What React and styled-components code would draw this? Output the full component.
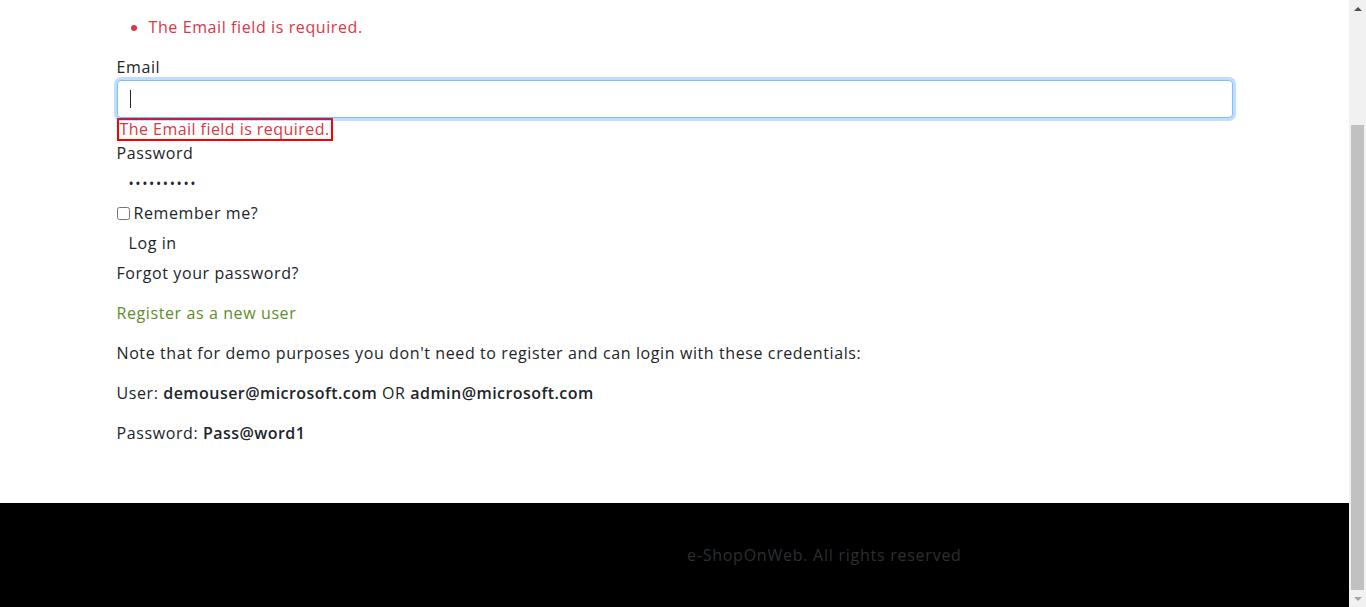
import React from "react";
import styled, { createGlobalStyle } from "styled-components";

const GlobalStyle = createGlobalStyle`
  html, body {
    margin: 0;
    padding: 0;
    background: #ffffff;
  }
  body {
    font-family: "Open Sans", "Liberation Sans", sans-serif;
    font-size: 16px;
    line-height: 24px;
    letter-spacing: 0.6px;
    color: #212529;
  }
  * {
    box-sizing: border-box;
  }
`;

const Page = styled.div`
  display: flex;
  flex-direction: column;
  margin-right: 17px;
`;

const Column = styled.div`
  width: 1116px;
  margin: 0 auto;
`;

const Summary = styled.ul`
  margin: 15px 0 16px;
  padding-left: 32px;
  color: #dc3545;
`;

const Label = styled.label`
  display: block;
  height: 24px;
  line-height: 24px;
`;

const InputWrap = styled.div`
  position: relative;
  margin-top: 1px;

  /* text caret of the focused field */
  &::after {
    content: "";
    position: absolute;
    left: 13px;
    top: 10px;
    width: 1px;
    height: 18px;
    background: #212529;
  }
`;

const EmailInput = styled.input`
  display: block;
  width: 100%;
  height: 38px;
  padding: 6px 12px;
  font: inherit;
  color: #495057;
  background: #fff;
  border: 1px solid #80bdff;
  border-radius: 4px;
  box-shadow: 0 0 0 3px rgba(0, 123, 255, 0.25);
  outline: none;
`;

const FieldError = styled.span`
  display: block;
  width: max-content;
  height: 23px;
  line-height: 19px;
  padding: 0 1px;
  border: 2px solid #ff0000;
  letter-spacing: 0.45px;
  color: #dc3545;
`;

const PasswordInput = styled.input`
  display: block;
  width: 300px;
  height: 30px;
  margin-top: 3px;
  padding: 0 12px;
  font: inherit;
  font-size: 14px;
  letter-spacing: 1.6px;
  color: #212529;
  background: transparent;
  border: none;
  outline: none;
`;

const CheckRow = styled.div`
  display: flex;
  align-items: center;
  height: 30px;
  gap: 4px;
`;

const Check = styled.input`
  width: 13px;
  height: 13px;
  margin: 0;
`;

const LoginButton = styled.button`
  display: block;
  height: 30px;
  padding: 0 12px;
  font: inherit;
  letter-spacing: inherit;
  color: #212529;
  background: transparent;
  border: none;
`;

const Line = styled.p`
  margin: 0 0 ${props => props.mb || "16px"};
  height: ${props => props.h || "24px"};
  line-height: ${props => props.h || "24px"};
  color: ${props => props.color || "#212529"};

  b {
    font-weight: 600;
    letter-spacing: 0.45px;
  }
`;

const Footer = styled.footer`
  margin-top: 42px;
  height: 104px;
  background: #000000;
  display: flex;
  align-items: center;
  padding-left: 687px;
  letter-spacing: 0.75px;
  color: #2b2f33;
`;

// window scrollbar, scrolled to the bottom of the page
const Scrollbar = styled.div`
  position: fixed;
  top: 0;
  right: 0;
  width: 17px;
  height: 607px;
  background: #f1f1f1;
  display: flex;
  flex-direction: column;
  align-items: center;
`;

const Arrow = styled.div`
  width: 17px;
  height: 17px;
  display: flex;
  align-items: center;
  justify-content: center;

  &::before {
    content: "";
    border-left: 4px solid transparent;
    border-right: 4px solid transparent;
    ${props =>
      props.down
        ? "border-top: 4px solid #a3a3a3;"
        : "border-bottom: 4px solid #505050;"}
  }
`;

const Track = styled.div`
  flex: 1;
  width: 100%;
  display: flex;
  flex-direction: column;
  justify-content: flex-end;
  align-items: center;
`;

const Thumb = styled.div`
  width: 13px;
  height: 465px;
  background: #c1c1c1;
`;

export default function App() {
  return (
    <Page>
      <GlobalStyle />
      <Column>
        <Summary>
          <li>The Email field is required.</li>
        </Summary>
        <Label htmlFor="email">Email</Label>
        <InputWrap>
          <EmailInput id="email" type="email" />
        </InputWrap>
        <FieldError>The Email field is required.</FieldError>
        <Label htmlFor="password">Password</Label>
        <PasswordInput id="password" type="password" defaultValue="Pass@word1" />
        <CheckRow>
          <Check type="checkbox" id="remember" />
          <label htmlFor="remember">Remember me?</label>
        </CheckRow>
        <LoginButton type="submit">Log in</LoginButton>
        <Line h="30px" mb="13px">Forgot your password?</Line>
        <Line color="#5f8c28">Register as a new user</Line>
        <Line>
          Note that for demo purposes you don't need to register and can login
          with these credentials:
        </Line>
        <Line>
          User: <b>demouser@microsoft.com</b> OR <b>admin@microsoft.com</b>
        </Line>
        <Line>
          Password: <b>Pass@word1</b>
        </Line>
      </Column>
      <Footer>e-ShopOnWeb. All rights reserved</Footer>
      <Scrollbar>
        <Arrow />
        <Track>
          <Thumb />
        </Track>
        <Arrow down />
      </Scrollbar>
    </Page>
  );
}
